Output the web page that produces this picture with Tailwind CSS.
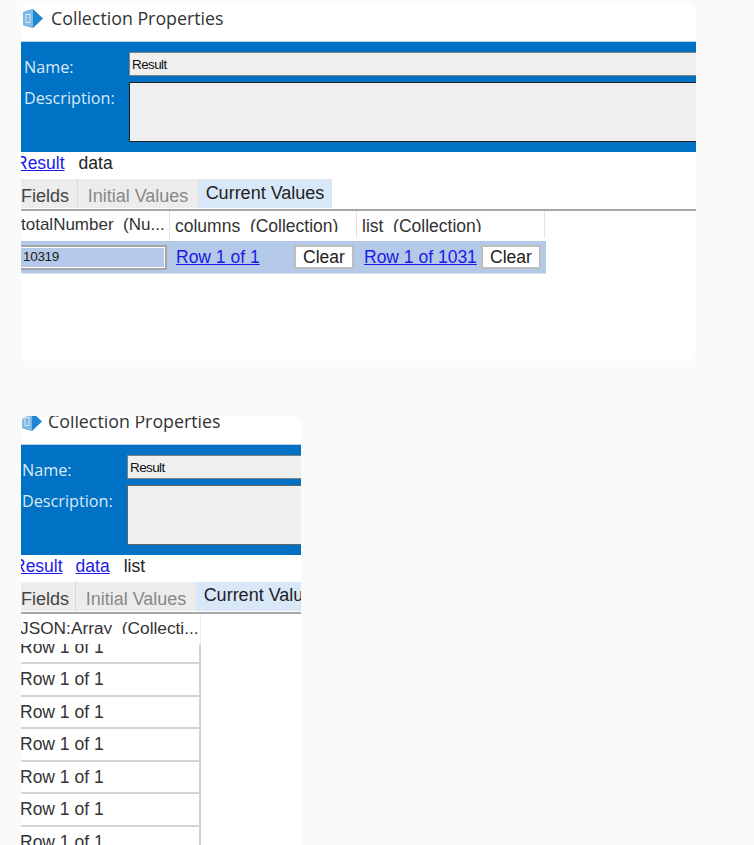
<!DOCTYPE html>
<html lang="en">
<head>
    <meta charset="UTF-8">
    <title>Collection Properties</title>
    <script src="https://cdn.jsdelivr.net/npm/@tailwindcss/browser@4"></script>
</head>
<body class="bg-[#fafafa] h-[845px] overflow-hidden font-['Open_Sans','Noto_Sans',sans-serif]">
    <div class="pl-[21px] pt-[3px]">
        <!-- first capture -->
        <section class="w-[675px] h-[358px] bg-white rounded-lg overflow-hidden">
            <div class="h-[38px] flex items-center pl-[1px] pb-[7px]">
                <svg class="w-[21px] h-[19px] blur-[0.4px]" viewBox="0 0 21 19">
                    <path d="M1 3 11 0l10 9.500L11 19 1 16z" fill="#1f86d3"/>
                    <path d="M1 3 11 0v19L1 16z" fill="#7db8e6"/>
                    <rect x="4" y="5.500" width="4" height="8" fill="none" stroke="#d5e8f7" stroke-width="1"/>
                </svg>
                <span class="ml-[8px] text-[17.8px] text-[#333]">Collection Properties</span>
            </div>
            <div class="h-[111px] bg-[#0072c6] border-t border-[#b9d3e6] pt-[10px] flex">
                <div class="w-[108px] shrink-0 pl-[3px] text-[16.2px] text-[#dbe9f5]">
                    <div class="h-[34px] pt-[3px]">Name:</div>
                    <div>Description:</div>
                </div>
                <div class="flex-1">
                    <div class="h-[24px] bg-[#f0f0f0] border border-[#808080] border-r-0 pl-[2px] text-[13.5px] tracking-[-0.6px] leading-[23px] text-[#111] font-['Liberation_Sans',sans-serif]">Result</div>
                    <div class="h-[60px] mt-[6px] bg-[#f0f0f0] border border-[#222] border-r-0"></div>
                </div>
            </div>
            <div class="h-[23px] flex items-center text-[17.5px] -ml-[6px] font-['Liberation_Sans',sans-serif]">
                <a class="text-[#1a1ae8] underline">Result</a>
                <span class="ml-[14px] text-[#222]">data</span>
            </div>
            <div class="h-[34px] mt-[2px] flex items-end border-b-[2px] border-[#a6a6a6] text-[18px] leading-[22px] font-['Liberation_Sans',sans-serif]">
                <div class="h-[29px] mb-[1px] w-[57px] bg-[#ececec] border-r border-[#d8d8d8] text-[#444] pt-[6px]">Fields</div>
                <div class="h-[29px] mb-[1px] w-[120px] bg-[#ececec] text-[#888] pt-[6px] text-center">Initial Values</div>
                <div class="h-[29px] mb-[1px] w-[134px] bg-[#d9e8f8] border border-[#dde4ea] border-b-0 text-[#222] pt-[2px] text-center">Current Values</div>
            </div>
            <div class="flex h-[30px] text-[17.5px] leading-[22px] text-[#333] font-['Liberation_Sans',sans-serif]">
                <div class="w-[149px] overflow-hidden whitespace-nowrap border-r border-[#e2e2e2] pt-[3px] text-[17px]">totalNumber&nbsp; (Nu...</div>
                <div class="w-[187px] h-[27px] border-r border-[#e2e2e2] pl-[5px]">
                    <div class="h-[21px] pt-[4px] overflow-hidden whitespace-nowrap">columns&nbsp; (Collection)</div>
                </div>
                <div class="w-[188px] h-[27px] border-r border-[#e2e2e2] pl-[5px]">
                    <div class="h-[21px] pt-[4px] overflow-hidden whitespace-nowrap">list&nbsp; (Collection)</div>
                </div>
            </div>
            <div class="flex items-center w-[525px] h-[33px] bg-[#b4c9e7] border-b border-[#dfe5ee] text-[17.5px] font-['Liberation_Sans',sans-serif]">
                <div class="w-[146px] h-[25px] bg-[#b4c9e7] border-2 border-[#a5a5a5] border-l-0 shadow-[inset_-1px_-1px_0_#ffffff,inset_0_1px_0_#ffffff] pl-[2px] text-[13.5px] tracking-[-0.3px] leading-[20px] text-[#222]">10319</div>
                <a class="ml-[9px] w-[118px] text-[#1a1ae8] underline whitespace-nowrap">Row 1 of 1</a>
                <button class="w-[60px] h-[24px] bg-white border-2 border-[#bdbdbd] text-[#222] leading-[20px]">Clear</button>
                <a class="ml-[10px] w-[117px] overflow-hidden text-[#1a1ae8] underline whitespace-nowrap">Row 1 of 1031</a>
                <button class="w-[60px] h-[24px] bg-white border-2 border-[#bdbdbd] text-[#222] leading-[20px]">Clear</button>
            </div>
        </section>

        <!-- second capture, scrolled a little and cut off on the right -->
        <section class="w-[280px] h-[440px] mt-[55px] bg-white rounded-t-lg overflow-hidden">
            <div class="h-[28px] flex items-start overflow-hidden">
                <svg class="w-[21px] h-[19px] -mt-[4px] blur-[0.4px]" viewBox="0 0 21 19">
                    <path d="M1 3 11 0l10 9.500L11 19 1 16z" fill="#1f86d3"/>
                    <path d="M1 3 11 0v19L1 16z" fill="#7db8e6"/>
                    <rect x="4" y="5.500" width="4" height="8" fill="none" stroke="#d5e8f7" stroke-width="1"/>
                </svg>
                <span class="ml-[6px] -mt-[8px] text-[17.8px] text-[#333] whitespace-nowrap">Collection Properties</span>
            </div>
            <div class="h-[111px] bg-[#0072c6] border-t border-[#b9d3e6] pt-[10px] flex">
                <div class="w-[106px] shrink-0 pl-[1px] text-[16.2px] text-[#dbe9f5]">
                    <div class="h-[34px] pt-[3px]">Name:</div>
                    <div>Description:</div>
                </div>
                <div class="flex-1">
                    <div class="h-[24px] bg-[#f0f0f0] border border-[#808080] border-r-0 pl-[2px] text-[13.5px] tracking-[-0.6px] leading-[23px] text-[#111] font-['Liberation_Sans',sans-serif]">Result</div>
                    <div class="h-[60px] mt-[6px] bg-[#f0f0f0] border border-[#666] border-r-0"></div>
                </div>
            </div>
            <div class="h-[23px] flex items-center text-[17.5px] -ml-[8px] font-['Liberation_Sans',sans-serif]">
                <a class="text-[#1a1ae8] underline">Result</a>
                <a class="ml-[13px] text-[#1a1ae8] underline">data</a>
                <span class="ml-[14px] text-[#222]">list</span>
            </div>
            <div class="h-[34px] mt-[2px] flex items-end border-b-[2px] border-[#a6a6a6] text-[18px] leading-[22px] whitespace-nowrap overflow-hidden font-['Liberation_Sans',sans-serif]">
                <div class="h-[29px] mb-[1px] w-[55px] shrink-0 bg-[#ececec] border-r border-[#d8d8d8] text-[#444] pt-[6px]">Fields</div>
                <div class="h-[29px] mb-[1px] w-[120px] shrink-0 bg-[#ececec] text-[#888] pt-[6px] text-center">Initial Values</div>
                <div class="h-[29px] mb-[1px] w-[134px] shrink-0 bg-[#d9e8f8] text-[#222] pt-[2px] text-center">Current Values</div>
            </div>
            <div class="w-[181px] -ml-[1px] text-[17.5px] leading-[22px] text-[#333] font-['Liberation_Sans',sans-serif]">
                <div class="h-[30px] border-r border-[#eeeeee] relative z-10 bg-white">
                    <div class="h-[20px] overflow-hidden whitespace-nowrap text-[17.3px] pt-[3px]">JSON:Array&nbsp; (Collecti...</div>
                </div>
                <div class="h-[34px] -mt-[14px] flex items-end pb-[4px] border-r-2 border-b-2 border-[#d4d4d4]">Row 1 of 1</div>
                <div class="h-[32.5px] flex items-center border-r-2 border-b-2 border-[#d4d4d4]">Row 1 of 1</div>
                <div class="h-[32.5px] flex items-center border-r-2 border-b-2 border-[#d4d4d4]">Row 1 of 1</div>
                <div class="h-[32.5px] flex items-center border-r-2 border-b-2 border-[#d4d4d4]">Row 1 of 1</div>
                <div class="h-[32.5px] flex items-center border-r-2 border-b-2 border-[#d4d4d4]">Row 1 of 1</div>
                <div class="h-[32.5px] flex items-center border-r-2 border-b-2 border-[#d4d4d4]">Row 1 of 1</div>
                <div class="h-[32.5px] flex items-center border-r-2 border-b-2 border-[#d4d4d4]">Row 1 of 1</div>
            </div>
        </section>
    </div>
</body>
</html>
